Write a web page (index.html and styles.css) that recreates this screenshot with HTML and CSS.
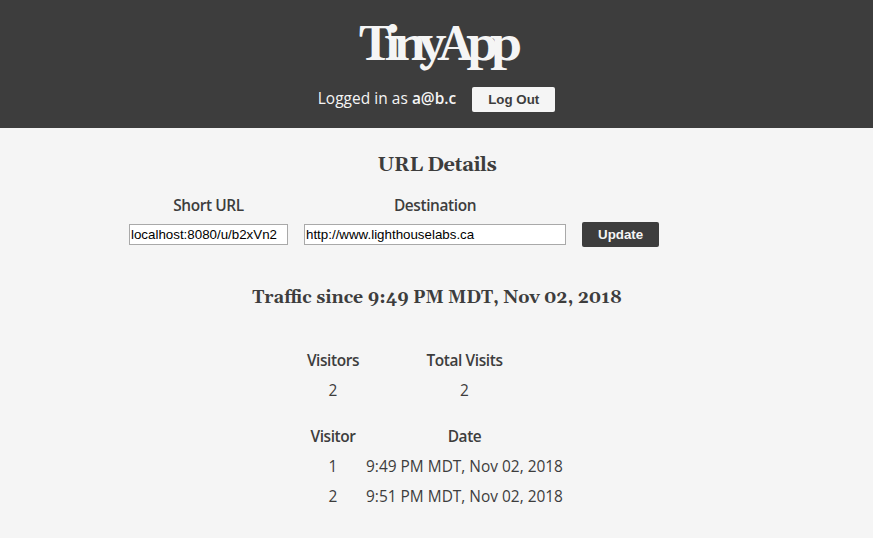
FILE: index.html
```html
<!DOCTYPE html>
<html lang="en">
<head>
<meta charset="utf-8">
<title>TinyApp</title>
<link rel="stylesheet" href="styles.css">
</head>
<body>
<header class="site-header">
  <h1 class="logo">TinyApp</h1>
  <div class="session">
    <span class="who">Logged in as <b>a@b.c</b></span>
    <button class="btn btn-light" type="button">Log Out</button>
  </div>
</header>
<main>
  <h2 class="title">URL Details</h2>
  <form class="url-form">
    <label for="short">Short URL</label>
    <label for="dest">Destination</label>
    <span></span>
    <input id="short" type="text" value="localhost:8080/u/b2xVn2">
    <input id="dest" type="text" value="http://www.lighthouselabs.ca">
    <button class="btn btn-dark" type="button">Update</button>
  </form>
  <h3 class="traffic">Traffic since 9:49 PM MDT, Nov 02, 2018</h3>
  <div class="stats">
    <b>Visitors</b><b>Total Visits</b>
    <span>2</span><span>2</span>
  </div>
  <div class="stats visits">
    <b>Visitor</b><b>Date</b>
    <span>1</span><span>9:49 PM MDT, Nov 02, 2018</span>
    <span>2</span><span>9:51 PM MDT, Nov 02, 2018</span>
  </div>
</main>
</body>
</html>
```
FILE: styles.css
```css
body {
  margin: 0;
  background: #f5f5f5;
  color: #3d3d3d;
  font: 15.45px/30px "Open Sans", "Noto Sans", sans-serif;
}
b, .url-form label {
  font-weight: 600;
  letter-spacing: -0.4px;
}
.site-header {
  box-sizing: border-box;
  height: 128px;
  padding-top: 16px;
  background: #3d3d3d;
  color: #f5f5f5;
}
.logo, .title, .traffic {
  margin: 0;
  font-family: Gelasio, Georgia, "DejaVu Serif", "Liberation Serif", serif;
  text-align: center;
  white-space: nowrap;
}
.logo {
  font-size: 48px;
  line-height: 60px;
  letter-spacing: -7.8px;
}
.session {
  display: flex;
  justify-content: center;
  align-items: center;
  gap: 16px;
  height: 30px;
  margin-top: 8px;
}
.who { padding-bottom: 2px; letter-spacing: 0.05px; }
.who b { letter-spacing: 0; }
.btn {
  height: 25px;
  padding: 0 16px;
  border: 0;
  border-radius: 2px;
  font: bold 13.333px "Liberation Sans", Arial, sans-serif;
}
.btn-light { background: #f5f5f5; color: #3d3d3d; }
.btn-dark { background: #3d3d3d; color: #f5f5f5; }
.title {
  padding: 22px 0 0 1px;
  font-size: 20px;
  line-height: 30px;
  letter-spacing: -0.45px;
}
.url-form {
  display: grid;
  grid-template-columns: 159px 262px 77px;
  column-gap: 16px;
  row-gap: 2px;
  align-items: center;
  width: 530px;
  margin: 10px 0 0 129px;
}
.url-form label { text-align: center; }
.url-form input {
  box-sizing: border-box;
  width: 100%;
  height: 21px;
  padding: 1px;
  border: 1px solid #a9a9a9;
  background: #fff;
  color: #000;
  font: 13.333px "Liberation Sans", Arial, sans-serif;
}
.traffic {
  margin-top: 36px;
  padding-left: 1px;
  font-size: 17.7px;
  line-height: 30px;
}
.stats {
  display: grid;
  grid-template-columns: 66px 197px;
  width: 263px;
  margin: 32px 0 0 300px;
  text-align: center;
  white-space: nowrap;
}
.visits { margin-top: 16px; }
```
